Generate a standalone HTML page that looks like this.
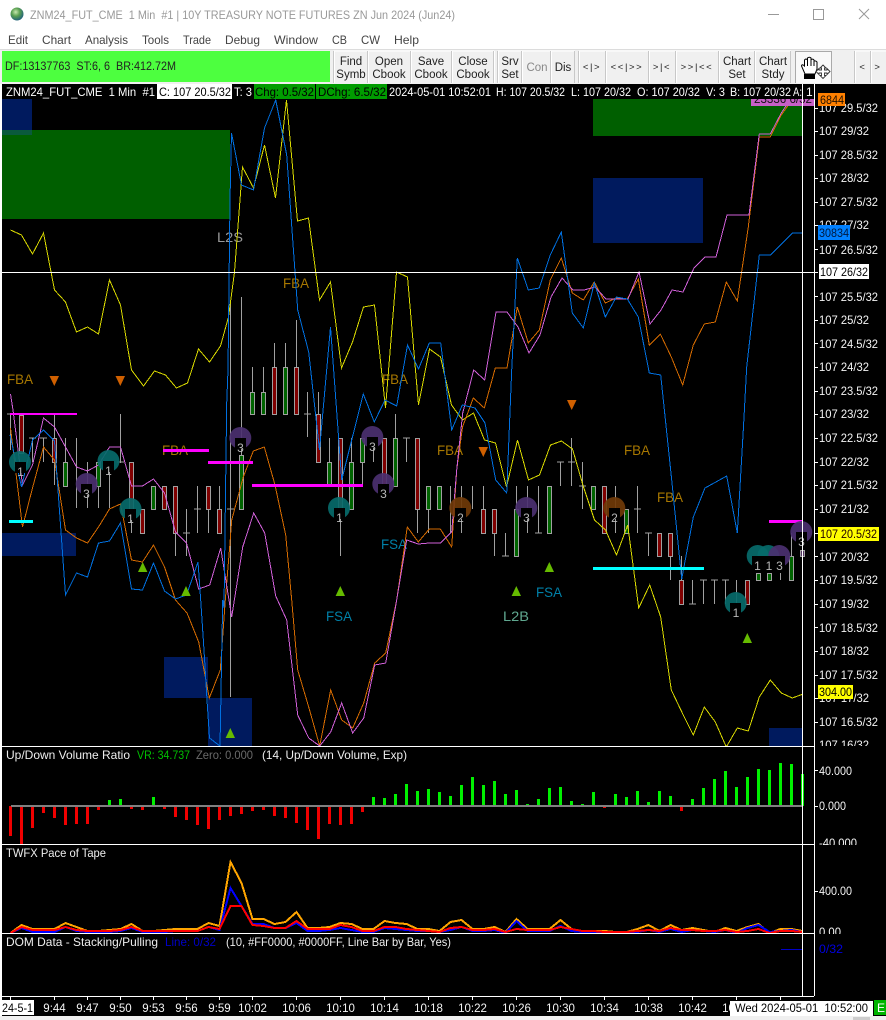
<!DOCTYPE html>
<html><head><meta charset="utf-8"><title>ZNM24_FUT_CME</title>
<style>
html,body{margin:0;padding:0;background:#000;width:886px;height:1020px;overflow:hidden}
svg{display:block;position:absolute;left:0;top:0}
text{font-family:"Liberation Sans",sans-serif;font-size:12px;white-space:pre}
.c{shape-rendering:crispEdges}
.l{fill:none;shape-rendering:crispEdges;stroke-width:1}
.p text{fill:#f4f4f4;font-size:12px}
.m text{fill:#444}
.t text{fill:#222;font-size:11.5px;text-anchor:middle}
.t text.s{font-size:9.5px;letter-spacing:1.6px}
.a text{fill:#f4f4f4;font-size:11.5px;text-anchor:middle}
.h text{fill:#fff;font-size:12px}
.k text{fill:#b8b8b8;font-size:12px;text-anchor:middle}
.f text{font-size:14px}
.i text{fill:#eee;font-size:12px}
</style></head><body>
<svg xmlns="http://www.w3.org/2000/svg" width="886" height="1020" viewBox="0 0 886 1020">
<defs>
<clipPath id="cc"><rect x="2" y="99" width="801" height="647"/></clipPath>
<radialGradient id="g" cx="40%" cy="35%" r="70%"><stop offset="0" stop-color="#c8e8b0"/><stop offset=".45" stop-color="#5aa050"/><stop offset="1" stop-color="#1c5c80"/></radialGradient>
</defs>
<rect width="886" height="1020" fill="#fff"/>
<circle cx="17" cy="14" r="6.5" fill="url(#g)"/>
<text x="30" y="19" textLength="425" lengthAdjust="spacingAndGlyphs" fill="#999">ZNM24_FUT_CME  1 Min  #1 | 10Y TREASURY NOTE FUTURES ZN Jun 2024 (Jun24)</text>
<g class="c" fill="none" stroke="#999"><path d="M768 14.5H779"/><rect x="813.5" y="9.5" width="10" height="10"/></g>
<path d="M859 9L869 19M869 9L859 19" stroke="#999" fill="none"/>
<g class="m">
<text x="8" y="44" textLength="20" lengthAdjust="spacingAndGlyphs">Edit</text>
<text x="42" y="44" textLength="29" lengthAdjust="spacingAndGlyphs">Chart</text>
<text x="85" y="44" textLength="43" lengthAdjust="spacingAndGlyphs">Analysis</text>
<text x="142" y="44" textLength="27" lengthAdjust="spacingAndGlyphs">Tools</text>
<text x="183" y="44" textLength="28" lengthAdjust="spacingAndGlyphs">Trade</text>
<text x="225" y="44" textLength="35" lengthAdjust="spacingAndGlyphs">Debug</text>
<text x="274" y="44" textLength="44" lengthAdjust="spacingAndGlyphs">Window</text>
<text x="332" y="44" textLength="15" lengthAdjust="spacingAndGlyphs">CB</text>
<text x="361" y="44" textLength="19" lengthAdjust="spacingAndGlyphs">CW</text>
<text x="394" y="44" textLength="25" lengthAdjust="spacingAndGlyphs">Help</text>
</g>
<g class="c">
<rect x="0" y="49" width="886" height="35" fill="#f0f0f0"/>
<rect x="0" y="49" width="886" height="1" fill="#dcdcdc"/>
<rect x="2" y="51" width="328" height="31" fill="#4dff3f"/>
<rect x="796" y="51" width="36" height="32" fill="#f9f9f9"/>
<path d="M334 51H494M498 51H575M579 51H791M855 51H886" stroke="#fff" stroke-width="1"/>
<path d="M368.500 51V83M411.500 51V83M452.500 51V83M494.500 51V83M522.500 51V83M551.500 51V83M606.500 51V83M649.500 51V83M676.500 51V83M719.500 51V83M755.500 51V83M871.500 51V83M334.500 51V83M498.500 51V83M579.500 51V83M855.500 51V83" stroke="#fff" fill="none"/>
<path d="M367.500 51V83M410.500 51V83M451.500 51V83M493.500 51V83M521.500 51V83M550.500 51V83M574.500 51V83M605.500 51V83M648.500 51V83M675.500 51V83M718.500 51V83M754.500 51V83M790.500 51V83M870.500 51V83M333.500 51V83M497.500 51V83M578.500 51V83M854.500 51V83" stroke="#c8c8c8" fill="none"/>
<path d="M795.500 83V51.500H831.500V83" stroke="#aaa" fill="none"/>
</g>
<text x="5" y="70" textLength="171" lengthAdjust="spacingAndGlyphs" fill="#222">DF:13137763  ST:6, 6  BR:412.72M</text>
<g class="t">
<text x="351" y="65">Find</text><text x="351" y="78">Symb</text>
<text x="389" y="65">Open</text><text x="389" y="78">Cbook</text>
<text x="431" y="65">Save</text><text x="431" y="78">Cbook</text>
<text x="473" y="65">Close</text><text x="473" y="78">Cbook</text>
<text x="510" y="65">Srv</text><text x="510" y="78">Set</text>
<text x="537" y="71" style="fill:#888">Con</text>
<text x="563" y="71">Dis</text>
<text class="s" x="592" y="70">&lt;|&gt;</text>
<text class="s" x="627" y="70">&lt;&lt;|&gt;&gt;</text>
<text class="s" x="662" y="70">&gt;|&lt;</text>
<text class="s" x="697" y="70">&gt;&gt;|&lt;&lt;</text>
<text x="737" y="65">Chart</text><text x="737" y="78">Set</text>
<text x="773" y="65">Chart</text><text x="773" y="78">Stdy</text>
<text class="s" x="863" y="70">&lt;</text><text class="s" x="878" y="70">&gt;</text>
</g>
<path d="M805 74L801.500 66Q802 63.500 804.500 66V60Q806 58 807.500 60V58Q809.500 56.500 811 58V59.500Q813 58.500 814 60V61Q816 60.500 817 62V69L815 74Z" fill="#fff" stroke="#000"/>
<path d="M807.500 60V66M811 59V66M814 61V66" stroke="#000" fill="none"/>
<rect x="804" y="74" width="11" height="5" fill="#000" class="c"/>
<path d="M823 65l3 3h-2v2h2v-2l0 0M823 65l-3 3h2v2h-2" fill="none" stroke="none"/>
<path d="M823 65L826 68H824.500V70H827V68.500L830 71.500L827 74.500V73H824.500V75.500H826L823 78.500L820 75.500H821.500V73H819V74.500L816 71.500L819 68.500V70H821.500V68H820Z" fill="#fff" stroke="#333" stroke-width=".9"/>

<!-- chart area -->
<rect x="2" y="84" width="884" height="932" fill="#000" class="c"/>
<rect x="0" y="1016" width="886" height="4" fill="#f0f0f0" class="c"/>
<rect x="853" y="1017" width="17" height="3" fill="#ccc" class="c"/>

<g class="c">
<rect x="2" y="99" width="30" height="36" fill="#001a5e"/>
<rect x="2" y="130" width="228" height="89" fill="#005f00"/>
<rect x="2" y="130" width="30" height="5" fill="#0a5a3c"/>
<rect x="593" y="99" width="209" height="37" fill="#005f00"/>
<rect x="593" y="178" width="110" height="65" fill="#001a5e"/>
<rect x="2" y="533" width="74" height="23" fill="#001a5e"/>
<rect x="164" y="657" width="44" height="41" fill="#001a5e"/>
<rect x="208" y="698" width="44" height="48" fill="#001a5e"/>
<rect x="769" y="728" width="33" height="18" fill="#001a5e"/>
</g>

<!-- candle wicks -->
<path class="l" stroke="#a0a0a0" d="M10.500 414V450M32.500 438V462M43.500 438V462M54.500 414V485M65.500 438V486M76.500 438V508M87.500 462V508M98.500 462V508M109.500 462V508M120.500 414V463M131.500 462V533M175.500 486V556M186.500 509V556M197.500 486V533M208.500 486V533M219.500 486V533M230.500 300V697M241.500 297V510M252.500 367V414M263.500 367V414M274.500 343V414M285.500 343V414M296.500 320V414M307.500 392V437M318.500 392V462M329.500 438V486M340.500 438V556M351.500 438V509M362.500 438V486M373.500 438V462M395.500 414V486M406.500 438V462M417.500 438V533M428.500 486V533M450.500 486V533M461.500 486V533M472.500 486V509M483.500 486V533M494.500 509V556M505.500 533V556M516.500 486V556M527.500 486V533M538.500 486V533M560.500 462V486M571.500 438V486M582.500 462V509M615.500 486V533M637.500 486V533M648.500 533V556M670.500 533V580M681.500 556V604M692.500 580V604M703.500 580V604M714.500 580V604M725.500 580V604M736.500 580V604M780.500 573V580M791.500 533V580
M7 414H14M29 438H36M40 438H47M117 462H124M183 533H190M194 509H201M227 509H234M304 414H311M403 438H410M535 533H542M502 556H509M557 462H564M568 462H575M579 486H586M634 509H641M645 533H652M689 604H696M700 580H707M711 580H718M722 580H729"/>
<!-- red bodies -->
<g class="c" fill="#800000" stroke="#a0a0a0">
<rect x="19.500" y="415.500" width="4" height="38"/><rect x="52.500" y="438.500" width="4" height="24"/><rect x="129.500" y="462.500" width="4" height="47"/><rect x="140.500" y="509.500" width="4" height="24"/><rect x="162.500" y="486.500" width="4" height="23"/><rect x="173.500" y="486.500" width="4" height="47"/><rect x="206.500" y="486.500" width="4" height="23"/><rect x="217.500" y="509.500" width="4" height="24"/><rect x="272.500" y="367.500" width="4" height="47"/><rect x="294.500" y="367.500" width="4" height="47"/><rect x="316.500" y="414.500" width="4" height="48"/><rect x="338.500" y="438.500" width="4" height="71"/><rect x="382.500" y="438.500" width="4" height="48"/><rect x="415.500" y="438.500" width="4" height="71"/><rect x="481.500" y="509.500" width="4" height="24"/><rect x="492.500" y="509.500" width="4" height="24"/><rect x="602.500" y="486.500" width="4" height="47"/><rect x="657.500" y="533.500" width="4" height="23"/><rect x="668.500" y="533.500" width="4" height="23"/><rect x="679.500" y="580.500" width="4" height="24"/><rect x="745.500" y="580.500" width="4" height="24"/>
</g>
<!-- green bodies -->
<g class="c" fill="#006400" stroke="#a0a0a0">
<rect x="63.500" y="462.500" width="4" height="24"/><rect x="96.500" y="462.500" width="4" height="24"/><rect x="151.500" y="486.500" width="4" height="23"/><rect x="239.500" y="455.500" width="4" height="54"/><rect x="250.500" y="392.500" width="4" height="22"/><rect x="261.500" y="392.500" width="4" height="22"/><rect x="283.500" y="367.500" width="4" height="47"/><rect x="327.500" y="462.500" width="4" height="24"/><rect x="349.500" y="462.500" width="4" height="47"/><rect x="360.500" y="438.500" width="4" height="24"/><rect x="393.500" y="438.500" width="4" height="48"/><rect x="426.500" y="486.500" width="4" height="23"/><rect x="437.500" y="486.500" width="4" height="23"/><rect x="514.500" y="509.500" width="4" height="47"/><rect x="547.500" y="486.500" width="4" height="47"/><rect x="591.500" y="486.500" width="4" height="23"/><rect x="624.500" y="509.500" width="4" height="24"/><rect x="756.500" y="573.500" width="4" height="7"/><rect x="767.500" y="573.500" width="4" height="7"/><rect x="789.500" y="556.500" width="4" height="24"/><rect x="800.500" y="550.500" width="4" height="6" fill="#503060"/>
</g>

<!-- text labels behind lines -->
<g class="f">
<g fill="#a87800">
<text x="7" y="384" textLength="26" lengthAdjust="spacingAndGlyphs">FBA</text>
<text x="162" y="455" textLength="26" lengthAdjust="spacingAndGlyphs">FBA</text>
<text x="283" y="288" textLength="26" lengthAdjust="spacingAndGlyphs">FBA</text>
<text x="382" y="384" textLength="26" lengthAdjust="spacingAndGlyphs">FBA</text>
<text x="437" y="455" textLength="26" lengthAdjust="spacingAndGlyphs">FBA</text>
<text x="624" y="455" textLength="26" lengthAdjust="spacingAndGlyphs">FBA</text>
<text x="657" y="502" textLength="26" lengthAdjust="spacingAndGlyphs">FBA</text>
</g>
<text x="217" y="242" textLength="26" lengthAdjust="spacingAndGlyphs" fill="#989898">L2S</text>
<g fill="#0080a8">
<text x="381" y="549" textLength="26" lengthAdjust="spacingAndGlyphs">FSA</text>
<text x="326" y="621" textLength="26" lengthAdjust="spacingAndGlyphs">FSA</text>
<text x="536" y="597" textLength="26" lengthAdjust="spacingAndGlyphs">FSA</text>
</g>
<text x="503" y="621" textLength="26" lengthAdjust="spacingAndGlyphs" fill="#60a890">L2B</text>
</g>

<!-- price lines -->
<g clip-path="url(#cc)">
<polyline class="l" stroke="#d8d800" points="10.500,230 21.500,235 32.500,254 43.500,233 54.500,290 65.500,302 76.500,332 87.500,327 98.500,334 109.500,280 120.500,305 131.500,370 143.500,386 154.500,371 165.500,375 176.500,388 187.500,383 198.500,349 209.500,362 220.500,346 228.500,317 234.500,272 242.500,167 253.500,188 264.500,145 275.500,198 286.500,100 297.500,221 308.500,218 319.500,300 330.500,282 341.500,368 352.500,342 363.500,307 374.500,305 385.500,408 396.500,272 407.500,277 418.500,405 429.500,349 440.500,357 451.500,405 462.500,420 473.500,413 484.500,440 495.500,443 506.500,487 517.500,440 528.500,480 539.500,475 550.500,445 561.500,441 572.500,449 583.500,487 594.500,520 605.500,530 616.500,555 627.700,525 638.700,608 649.700,585 660.700,617 671.300,690 682.300,713 693.300,735 704.300,707 715.300,722 726.300,747 737.300,728 748.300,731 759.300,697 770.300,680 781.300,693 792.300,698 803.300,694"/>
<polyline class="l" stroke="#d46a00" points="10.500,428 22.500,527 32.500,488 43.500,447 54.500,460 65.500,530 76.500,538 87.500,543 98.500,527 109.500,509 120.500,504 131.500,560 142.500,562 153.500,545 164.500,567 175.500,600 187,613 198.700,642 209.300,698 220.300,670 225.300,600 230,543 231.700,520 243.300,477 253.300,451 264.300,447 275,485 285.700,535 291.700,600 297.700,670 308.700,707 319.700,746 330.700,690 341.700,720 352.700,728 363.700,703 374.700,663 385.700,653 396.700,600 407.300,527 418.300,542 429.300,529 440.300,529 451.700,547 456.700,470 462.500,427 473.300,398 484.300,408 495.300,368 507,368 517.300,307 528.300,343 539.300,330 550.300,280 561.300,258 572.300,293 583.300,300 594.300,282 605.300,303 616.300,298 627.300,299 638.300,279 649.300,345 660.300,334 671.300,357 682.700,385 693.300,345 704.300,324 715.300,322 726.300,282 737.300,301 748.300,227 759.300,137 770.300,137 781.300,115 792,100 800,99"/>
<polyline class="l" stroke="#d060d8" points="10.500,394 13,410 22.500,485 32.500,465 43.500,418 54.500,427 65.500,447 76.500,467 87.500,471 98.500,465 109.500,447 120.500,447 131.500,486 142.500,486 153.500,479 164.500,493 175.500,532 186.500,543 198.700,589 209.700,585 220.700,548 231.700,617 242.700,547 253.700,513 264.700,533 275.700,596 286.700,620 297.700,715 308.700,738 319.700,746 330.700,732 341.700,703 352.700,733 363.700,718 374.700,665 385.700,663 396.700,600 406.700,540 418.300,544 429.300,543 440.300,543 451.700,532 456.700,470 462.700,413 473.700,370 484.700,380 496,312 507,312 518,327 529,353 540,335 551,297 562,278 573,290 584,290 595,287 606,299 617,299 628,299 639,272 650,324 661,310 672,290 683,292 694,268 705,257 716,257 727,215 749,215 759.300,134 770.300,134 781.300,113 790,100 802,100"/>
<polyline class="l" stroke="#0070e0" points="10,435 21.500,487 32.500,440 43.500,430 54.500,441 65.500,595 76.500,573 87.500,577 98.500,543 109.500,541 120.500,523 131.500,589 142.500,590 153.500,563 164.500,591 175.500,599 186.500,595 198,562 200.700,600 204,650 207,700 209.500,738 220,746 222.700,600 224,608 226.700,403 228,370 230,200 231.500,133 241.500,185 253.500,190 264.500,128 275.700,100 286.700,155 297.700,310 308.700,352 319.500,450 330.500,327 341.700,480 351.700,440 363.300,394 374.300,422 385,400 396.700,406 407.500,345 418.500,369 429.300,343 440.700,343 451.700,430 462.300,405 475,408 485,423 495.700,480 506.700,493 511.700,370 517.300,258 528.300,290 539.300,288 550.300,255 561.300,232 572.300,313 583.300,328 594.300,283 605.300,317 616.300,297 627.300,299 638.300,317 649.300,373 660.700,375 671.700,480 681.700,579 693.300,517 705,488 726.700,476 737.300,533 743.300,430 746.700,367 759.300,255 770.300,255 792.300,233 802.300,233"/>
</g>

<!-- pink & cyan levels -->
<g class="c" fill="#ff00ff">
<rect x="10" y="413" width="67" height="2"/><rect x="163" y="449" width="46" height="3"/><rect x="208" y="461" width="45" height="3"/><rect x="252" y="484" width="111" height="3"/><rect x="769" y="520" width="33" height="3"/>
</g>
<g class="c" fill="#00ffff">
<rect x="9" y="520" width="24" height="3"/><rect x="593" y="567" width="111" height="3"/>
</g>

<!-- circles -->
<g fill-opacity=".92">
<g fill="#066a6a">
<circle cx="20" cy="462" r="11"/><circle cx="108.500" cy="461" r="11"/><circle cx="130.500" cy="509" r="11"/><circle cx="339" cy="508" r="11"/><circle cx="735.700" cy="603" r="11"/><circle cx="757.700" cy="556" r="11"/><circle cx="768.300" cy="556" r="11"/>
</g>
<g fill="#4b3070">
<circle cx="86.700" cy="484" r="11"/><circle cx="240.300" cy="438" r="11"/><circle cx="372.300" cy="437" r="11"/><circle cx="383.300" cy="484" r="11"/><circle cx="526.300" cy="508" r="11"/><circle cx="779.300" cy="556" r="11"/><circle cx="801.300" cy="532" r="11"/>
</g>
<g fill="#703a08">
<circle cx="460.300" cy="508" r="11"/><circle cx="614.300" cy="508" r="11"/>
</g>
</g>
<g class="c" fill="#000">
<rect x="15" y="462" width="11" height="11"/><rect x="103" y="461" width="11" height="11"/><rect x="125" y="509" width="11" height="11"/><rect x="334" y="508" width="11" height="11"/><rect x="730" y="603" width="11" height="11"/><rect x="752" y="556" width="11" height="11"/><rect x="763" y="556" width="11" height="11"/><rect x="774" y="556" width="11" height="11"/>
<rect x="81" y="484" width="11" height="11"/><rect x="235" y="438" width="11" height="11"/><rect x="367" y="437" width="11" height="11"/><rect x="378" y="484" width="11" height="11"/><rect x="521" y="508" width="11" height="11"/><rect x="796" y="532" width="11" height="11"/><rect x="455" y="508" width="11" height="11"/><rect x="609" y="508" width="11" height="11"/>
</g>
<g class="k">
<text x="20.500" y="476">1</text><text x="108.500" y="475">1</text><text x="130.500" y="523">1</text><text x="339.500" y="522">1</text><text x="736" y="617">1</text><text x="757.500" y="570">1</text><text x="769" y="570">1</text><text x="779.500" y="570">3</text>
<text x="86.500" y="498">3</text><text x="240.500" y="452">3</text><text x="372.500" y="451">3</text><text x="383.500" y="498">3</text><text x="526.500" y="522">3</text><text x="801.500" y="546">3</text><text x="460.500" y="522">2</text><text x="614.500" y="522">2</text>
</g>

<!-- triangles -->
<g fill="#66bb00">
<polygon points="142.700,562 138,572 147.400,572"/><polygon points="186,586 181.300,596 190.700,596"/><polygon points="230.300,728 225.600,738 235,738"/><polygon points="340.300,586 335.600,596 345,596"/><polygon points="516.300,586 511.600,596 521,596"/><polygon points="549.300,562 544.600,572 554,572"/><polygon points="747.300,633 742.600,643 752,643"/>
</g>
<g fill="#d06000">
<polygon points="54.300,386 49.500,376 59,376"/><polygon points="120.300,386 115.500,376 125,376"/><polygon points="483.300,457 478.500,447 488,447"/><polygon points="571.700,410 567,400 576.500,400"/>
</g>

<!-- sub-panel: volume bars -->
<path class="c" fill="none" stroke="#f00000" stroke-width="3" d="M10.500 806V836M21.500 806V844M32.500 806V828M43.500 806V813M54.500 806V818M65.500 806V825M76.500 806V824M87.500 806V824M98.500 806V810M131.500 806V809M142.500 806V810M164.500 806V809M175.500 806V817M186.500 806V820M197.500 806V825M208.500 806V829M219.500 806V820M230.500 806V816M241.500 806V814M252.500 806V811M263.500 806V810M274.500 806V816M285.500 806V818M296.500 806V823M307.500 806V830M318.500 806V839M329.500 806V824M340.500 806V825M351.500 806V824M362.500 806V812M604.500 806V808M681.500 806V811"/>
<path class="c" fill="none" stroke="#00f000" stroke-width="3" d="M109.500 806V800M120.500 806V799M153.500 806V797M373.500 806V797M384.500 806V798M395.500 806V794M406.500 806V784M417.500 806V791M428.500 806V789M439.500 806V792M450.500 806V796M461.500 806V785M472.500 806V777M483.500 806V785M494.500 806V781M505.500 806V794M516.500 806V790M527.500 806V804M538.500 806V799M549.500 806V788M560.500 806V787M571.500 806V801M582.500 806V804M593.500 806V792M615.500 806V794M626.500 806V797M637.500 806V791M648.500 806V802M659.500 806V791M670.500 806V796M692.500 806V799M703.500 806V788M714.500 806V779M725.500 806V771M736.500 806V787M747.500 806V777M758.500 806V769M769.500 806V770M780.500 806V763M791.500 806V764M802.500 806V774"/>
<rect class="c" x="11" y="805" width="792" height="2" fill="#808080"/>

<!-- pace of tape -->
<polyline class="l" style="stroke-width:2" stroke="#ffa500" points="10.500,933 21.500,925 32.500,929 43.500,929 54.500,929 65.500,923 76.500,927 87.500,931 98.500,931 109.500,930 120.500,929 131.500,924 142.500,931 153.500,931 164.500,930 175.500,929 186.500,929 197.500,929 208.500,923 219.500,926 230.500,862 241.500,883 252.500,919 263.500,919 274.500,924 285.500,922 296.500,912 307.500,928 318.500,928 329.500,927 340.500,923 351.500,924 362.500,929 373.500,929 384.500,921 395.500,923 406.500,924 417.500,929 428.500,929 439.500,931 450.500,922 461.500,920 472.500,929 483.500,929 494.500,927 505.500,932 516.500,919 527.500,929 538.500,929 549.500,929 560.500,920 571.500,929 582.500,931 593.500,931 604.500,931 615.500,932 626.500,932 637.500,929 648.500,925 659.500,931 670.500,925 681.500,930 692.500,928 703.500,930 714.500,932 725.500,928 736.500,931 747.500,927 758.500,924 769.500,933 780.500,929 791.500,929 802.500,931"/>
<polyline class="l" style="stroke-width:2" stroke="#0000ff" points="10.500,933 21.500,928 32.500,932 43.500,932 54.500,932 65.500,927 76.500,931 87.500,932 98.500,932 109.500,932 120.500,931 131.500,928 142.500,932 153.500,932 164.500,932 175.500,931 186.500,931 197.500,931 208.500,927 219.500,930 230.500,888 241.500,906 252.500,924 263.500,924 274.500,928 285.500,928 296.500,923 307.500,931 318.500,931 329.500,930 340.500,928 351.500,930 362.500,932 373.500,932 384.500,928 395.500,929 406.500,930 417.500,931 428.500,931 439.500,932 450.500,930 461.500,927 472.500,931 483.500,931 494.500,930 505.500,933 516.500,921 527.500,931 538.500,931 549.500,931 560.500,926 571.500,931 582.500,932 593.500,932 604.500,933 615.500,933 626.500,933 637.500,932 648.500,930 659.500,932 670.500,929 681.500,932 692.500,930 703.500,931 714.500,932 725.500,930 736.500,933 747.500,928 758.500,925 769.500,932 780.500,931 791.500,930 802.500,932"/>
<polyline class="l" style="stroke-width:2" stroke="#ff0000" points="10.500,933 21.500,927 32.500,930 43.500,930 54.500,930 65.500,927 76.500,930 87.500,931 98.500,931 109.500,931 120.500,930 131.500,927 142.500,931 153.500,931 164.500,931 175.500,931 186.500,931 197.500,931 208.500,927 219.500,929 230.500,906 241.500,906 252.500,925 263.500,926 274.500,928 285.500,928 296.500,921 307.500,929 318.500,929 329.500,929 340.500,925 351.500,927 362.500,931 373.500,931 384.500,927 395.500,927 406.500,929 417.500,930 428.500,931 439.500,932 450.500,928 461.500,927 472.500,930 483.500,930 494.500,929 505.500,932 516.500,929 527.500,930 538.500,930 549.500,930 560.500,927 571.500,929 582.500,931 593.500,931 604.500,932 615.500,932 626.500,932 637.500,931 648.500,930 659.500,931 670.500,928 681.500,930 692.500,930 703.500,931 714.500,931 725.500,930 736.500,932 747.500,931 758.500,929 769.500,933 780.500,931 791.500,931 802.500,932"/>
<path class="c" d="M781 949.500H802" stroke="#0000c8" fill="none"/>

<!-- pink top right label -->
<rect class="c" x="751" y="99" width="63" height="7" fill="#c860c8"/>
<text x="754" y="103" textLength="58" lengthAdjust="spacingAndGlyphs" fill="#111" font-size="11">23336 6/32</text>

<!-- frame lines -->
<rect class="c" x="0" y="84" width="2" height="932" fill="#fff"/>
<g class="c" fill="#fff">
<rect x="802" y="84" width="1" height="912"/>
<rect x="814" y="84" width="1" height="912"/>
<rect x="2" y="272" width="812" height="1"/>
</g>

<!-- price axis -->
<g class="p">
<text x="819" y="112" textLength="59" lengthAdjust="spacingAndGlyphs">107 29.5/32</text>
<text x="819" y="135" textLength="50" lengthAdjust="spacingAndGlyphs">107 29/32</text>
<text x="819" y="159" textLength="59" lengthAdjust="spacingAndGlyphs">107 28.5/32</text>
<text x="819" y="182" textLength="50" lengthAdjust="spacingAndGlyphs">107 28/32</text>
<text x="819" y="206" textLength="59" lengthAdjust="spacingAndGlyphs">107 27.5/32</text>
<text x="819" y="229" textLength="50" lengthAdjust="spacingAndGlyphs">107 27/32</text>
<text x="819" y="254" textLength="59" lengthAdjust="spacingAndGlyphs">107 26.5/32</text>
<text x="819" y="301" textLength="59" lengthAdjust="spacingAndGlyphs">107 25.5/32</text>
<text x="819" y="324" textLength="50" lengthAdjust="spacingAndGlyphs">107 25/32</text>
<text x="819" y="348" textLength="59" lengthAdjust="spacingAndGlyphs">107 24.5/32</text>
<text x="819" y="371" textLength="50" lengthAdjust="spacingAndGlyphs">107 24/32</text>
<text x="819" y="395" textLength="59" lengthAdjust="spacingAndGlyphs">107 23.5/32</text>
<text x="819" y="418" textLength="50" lengthAdjust="spacingAndGlyphs">107 23/32</text>
<text x="819" y="442" textLength="59" lengthAdjust="spacingAndGlyphs">107 22.5/32</text>
<text x="819" y="466" textLength="50" lengthAdjust="spacingAndGlyphs">107 22/32</text>
<text x="819" y="489" textLength="59" lengthAdjust="spacingAndGlyphs">107 21.5/32</text>
<text x="819" y="513" textLength="50" lengthAdjust="spacingAndGlyphs">107 21/32</text>
<text x="819" y="561" textLength="50" lengthAdjust="spacingAndGlyphs">107 20/32</text>
<text x="819" y="584" textLength="59" lengthAdjust="spacingAndGlyphs">107 19.5/32</text>
<text x="819" y="608" textLength="50" lengthAdjust="spacingAndGlyphs">107 19/32</text>
<text x="819" y="632" textLength="59" lengthAdjust="spacingAndGlyphs">107 18.5/32</text>
<text x="819" y="655" textLength="50" lengthAdjust="spacingAndGlyphs">107 18/32</text>
<text x="819" y="679" textLength="59" lengthAdjust="spacingAndGlyphs">107 17.5/32</text>
<text x="819" y="702" textLength="50" lengthAdjust="spacingAndGlyphs">107 17/32</text>
<text x="819" y="726" textLength="59" lengthAdjust="spacingAndGlyphs">107 16.5/32</text>
<text x="819" y="749" textLength="50" lengthAdjust="spacingAndGlyphs">107 16/32</text>
<text x="819" y="775" textLength="33" lengthAdjust="spacingAndGlyphs">40.000</text>
<text x="819" y="810" textLength="27" lengthAdjust="spacingAndGlyphs">0.000</text>
<text x="819" y="847" textLength="38" lengthAdjust="spacingAndGlyphs">-40.000</text>
<text x="819" y="895" textLength="33" lengthAdjust="spacingAndGlyphs">400.00</text>
<text x="819" y="936" textLength="22" lengthAdjust="spacingAndGlyphs">0.00</text>
</g>
<path class="c" fill="none" stroke="#fff" d="M815 108.500H818M815 131.500H818M815 155.500H818M815 178.500H818M815 202.500H818M815 225.500H818M815 249.500H818M815 272.500H818M815 296.500H818M815 320.500H818M815 343.500H818M815 367.500H818M815 391.500H818M815 414.500H818M815 438.500H818M815 462.500H818M815 485.500H818M815 509.500H818M815 533.500H818M815 556.500H818M815 580.500H818M815 604.500H818M815 627.500H818M815 651.500H818M815 675.500H818M815 698.500H818M815 722.500H818M815 770.500H818M815 806.500H818M815 891.500H818"/>
<g class="c" fill="#000">
<rect x="815" y="746" width="71" height="8"/>
<rect x="815" y="845" width="71" height="8"/>
<rect x="815" y="934" width="71" height="8"/>
</g>
<rect class="c" x="818" y="527" width="61" height="14" fill="#ffff00"/>
<text x="820" y="538" textLength="57" lengthAdjust="spacingAndGlyphs" fill="#200000">107 20.5/32</text>
<rect class="c" x="819" y="264" width="50" height="15" fill="#fff"/>
<text x="820" y="276" textLength="48" lengthAdjust="spacingAndGlyphs" fill="#000">107 26/32</text>
<rect class="c" x="818" y="225" width="32" height="15" fill="#0080ff"/>
<text x="819" y="237" textLength="30" lengthAdjust="spacingAndGlyphs" fill="#00183c">30834</text>
<rect class="c" x="818" y="685" width="35" height="14" fill="#ffff00"/>
<text x="819" y="696" textLength="33" lengthAdjust="spacingAndGlyphs" fill="#000">304.00</text>
<text x="819" y="953" textLength="24" lengthAdjust="spacingAndGlyphs" fill="#0000e0">0/32</text>

<!-- panel dividers -->
<g class="c" fill="#fff">
<rect x="2" y="746" width="812" height="1"/>
<rect x="2" y="844" width="812" height="1"/>
<rect x="2" y="933" width="812" height="1"/>
<rect x="2" y="996" width="812" height="1"/>
</g>
<path class="c" fill="none" stroke="#fff" d="M10.500 997V1000M54.500 997V1000M87.500 997V1000M120.500 997V1000M153.500 997V1000M186.500 997V1000M219.500 997V1000M252.500 997V1000M296.500 997V1000M340.500 997V1000M384.500 997V1000M428.500 997V1000M472.500 997V1000M516.500 997V1000M560.500 997V1000M604.500 997V1000M648.500 997V1000M692.500 997V1000M736.500 997V1000M780.500 997V1000"/>

<!-- panel titles -->
<g class="i">
<text x="6" y="759" textLength="124" lengthAdjust="spacingAndGlyphs">Up/Down Volume Ratio</text>
<text x="137" y="759" textLength="53" lengthAdjust="spacingAndGlyphs" style="fill:#00c000">VR: 34.737</text>
<text x="196" y="759" textLength="57" lengthAdjust="spacingAndGlyphs" style="fill:#6a6a6a">Zero: 0.000</text>
<text x="262" y="759" textLength="145" lengthAdjust="spacingAndGlyphs">(14, Up/Down Volume, Exp)</text>
<text x="6" y="857" textLength="100" lengthAdjust="spacingAndGlyphs">TWFX Pace of Tape</text>
<text x="6" y="946" textLength="152" lengthAdjust="spacingAndGlyphs">DOM Data - Stacking/Pulling</text>
<text x="165" y="946" textLength="51" lengthAdjust="spacingAndGlyphs" style="fill:#0000c8">Line: 0/32</text>
<text x="226" y="946" textLength="225" lengthAdjust="spacingAndGlyphs">(10, #FF0000, #0000FF, Line Bar by Bar, Yes)</text>
</g>

<!-- header bar -->
<rect class="c" x="2" y="84" width="812" height="15" fill="#000"/>
<rect class="c" x="802" y="84" width="1" height="15" fill="#fff"/>
<rect class="c" x="157" y="84" width="75" height="15" fill="#fff"/>
<rect class="c" x="254" y="84" width="61" height="15" fill="#009c00"/>
<rect class="c" x="316" y="84" width="71" height="15" fill="#009c00"/>
<g class="h">
<text x="6" y="96" textLength="149" lengthAdjust="spacingAndGlyphs">ZNM24_FUT_CME  1 Min  #1</text>
<text x="159" y="96" textLength="72" lengthAdjust="spacingAndGlyphs" style="fill:#000">C: 107 20.5/32</text>
<text x="234" y="96" textLength="18" lengthAdjust="spacingAndGlyphs">T: 3</text>
<text x="255" y="96" textLength="59" lengthAdjust="spacingAndGlyphs" style="fill:#000">Chg: 0.5/32</text>
<text x="318" y="96" textLength="68" lengthAdjust="spacingAndGlyphs" style="fill:#000">DChg: 6.5/32</text>
<text x="389" y="96" textLength="102" lengthAdjust="spacingAndGlyphs">2024-05-01 10:52:01</text>
<text x="496" y="96" textLength="69" lengthAdjust="spacingAndGlyphs">H: 107 20.5/32</text>
<text x="571" y="96" textLength="60" lengthAdjust="spacingAndGlyphs">L: 107 20/32</text>
<text x="637" y="96" textLength="63" lengthAdjust="spacingAndGlyphs">O: 107 20/32</text>
<text x="706" y="96" textLength="19" lengthAdjust="spacingAndGlyphs">V: 3</text>
<text x="730" y="96" textLength="61" lengthAdjust="spacingAndGlyphs">B: 107 20/32</text>
<text x="793" y="96" textLength="9" lengthAdjust="spacingAndGlyphs">A:</text>
<text x="806" y="96">1</text>
</g>
<rect class="c" x="818" y="93" width="27" height="13" fill="#ff8000"/>
<text x="820" y="104" textLength="24" lengthAdjust="spacingAndGlyphs" fill="#201000">6844</text>

<!-- time axis -->
<g class="a">
<text x="54.500" y="1012">9:44</text><text x="87.500" y="1012">9:47</text><text x="120.500" y="1012">9:50</text><text x="153.500" y="1012">9:53</text><text x="186.500" y="1012">9:56</text><text x="219.500" y="1012">9:59</text><text x="252.500" y="1012">10:02</text><text x="296.500" y="1012">10:06</text><text x="340.500" y="1012">10:10</text><text x="384.500" y="1012">10:14</text><text x="428.500" y="1012">10:18</text><text x="472.500" y="1012">10:22</text><text x="516.500" y="1012">10:26</text><text x="560.500" y="1012">10:30</text><text x="604.500" y="1012">10:34</text><text x="648.500" y="1012">10:38</text><text x="692.500" y="1012">10:42</text><text x="736.500" y="1012">10:46</text>
</g>
<rect class="c" x="2" y="1000" width="32" height="15" fill="#fff"/>
<text x="2" y="1012" textLength="31" lengthAdjust="spacingAndGlyphs" fill="#000">24-5-1</text>
<rect class="c" x="730" y="1001" width="143" height="15" fill="#fff"/>
<text x="735" y="1012" textLength="133" lengthAdjust="spacingAndGlyphs" fill="#000">Wed 2024-05-01  10:52:00</text>
<rect class="c" x="874" y="1000" width="12" height="15" fill="#00b400"/>
<text x="877" y="1012" fill="#fff">E</text>
</svg>
</body></html>
